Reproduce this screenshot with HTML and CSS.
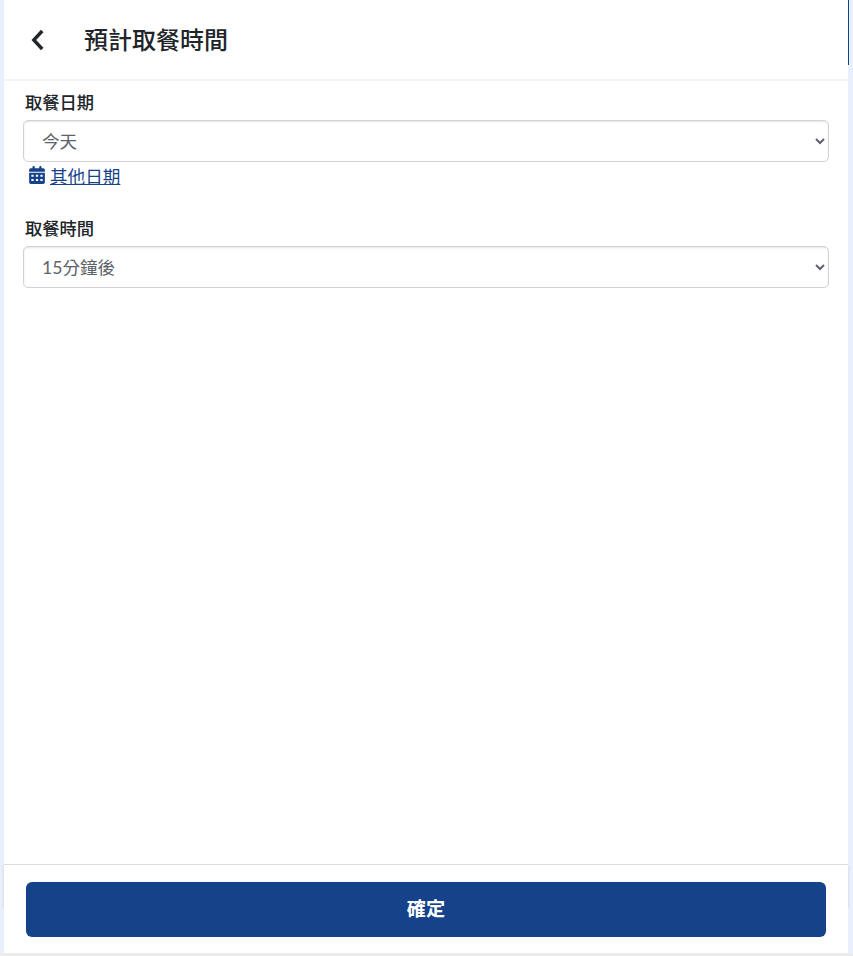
FILE: index.html
```html
<!DOCTYPE html>
<html lang="zh-Hant">
<head>
<meta charset="utf-8">
<title>預計取餐時間</title>
<link rel="stylesheet" href="styles.css">
</head>
<body>
<div class="panel">
  <header class="top">
    <a class="back" href="#" aria-label="返回">
      <svg width="14" height="22" viewBox="0 0 14 22"><path d="M11.200 2 2.800 11l8.400 9" fill="none" stroke="#212529" stroke-width="3.400"/></svg>
    </a>
    <h1 class="title">預計取餐時間</h1>
  </header>
  <main class="content">
    <section class="field">
      <label class="label" for="d">取餐日期</label>
      <select class="select" id="d"><option>今天</option></select>
      <a class="other" href="#">
        <svg class="cal" width="16" height="18" viewBox="0 0 448 512"><path fill="#164289" d="M96 32v32H48C21.500 64 0 85.500 0 112v48h448v-48c0-26.500-21.500-48-48-48h-48V32c0-17.700-14.300-32-32-32s-32 14.300-32 32v32H160V32c0-17.700-14.300-32-32-32S96 14.300 96 32zM448 192H0v272c0 26.500 21.500 48 48 48h352c26.500 0 48-21.500 48-48V192zM64 248h64v56H64v-56zm128 0h64v56h-64v-56zm128 0h64v56h-64v-56zM64 368h64v56H64v-56zm128 0h64v56h-64v-56zm128 0h64v56h-64v-56z" fill-rule="evenodd"/></svg>
        <span class="other-text">其他日期</span>
      </a>
    </section>
    <section class="field field-time">
      <label class="label" for="t">取餐時間</label>
      <select class="select" id="t"><option>15分鐘後</option></select>
    </section>
  </main>
  <footer class="bottom">
    <button class="confirm" type="button"><span class="confirm-text">確定</span></button>
  </footer>
</div>
</body>
</html>
```
FILE: styles.css
```css
* { box-sizing: border-box; }
html, body { height: 100%; }
body {
  margin: 0;
  background: #e8effd;
  font-family: Lato, "Noto Sans CJK TC", sans-serif;
  color: #212529;
  overflow: hidden;
}
body::after {
  content: "";
  position: absolute;
  left: 0;
  right: 0;
  top: 953px;
  height: 3px;
  background: #ececec;
}
.panel {
  width: 844px;
  height: 953px;
  margin-left: 4px;
  background: #fff;
  display: flex;
  flex-direction: column;
  position: relative;
}
.panel::after {
  content: "";
  position: absolute;
  top: 0;
  right: -1px;
  width: 1px;
  height: 65px;
  background: #164289;
}
.top {
  height: 81px;
  flex: none;
  display: flex;
  align-items: center;
  border-bottom: 2px solid #f3f3f4;
  padding-left: 24px;
}
.back { display: flex; width: 56px; padding-left: 3px; }
.title {
  margin: 0;
  font-size: 24px;
  font-weight: 500;
  line-height: 30px;
  color: #212529;
}
.content { flex: 1; padding: 10px 19px 0 19px; }
.field { display: flex; flex-direction: column; align-items: stretch; }
.field-time { margin-top: 30px; }
.label {
  font-size: 17.300px;
  font-weight: 500;
  line-height: 24px;
  margin: 0 0 5px 2px;
  color: #212529;
  height: 24px;
}
.select {
  height: 42px;
  width: 100%;
  padding: 0 14px;
  font-family: Lato, "Noto Sans CJK TC", sans-serif;
  font-size: 17.600px;
  color: #5c636a;
  background: #fff;
  border: 1px solid #d0d3d6;
  border-radius: 5px;
  box-shadow: inset 0 1px 2px rgba(0, 0, 0, .1);
}
.other {
  display: flex;
  align-items: center;
  gap: 5px;
  margin: 1px 0 0 6px;
  height: 24px;
  font-size: 17.600px;
  color: #164289;
  text-decoration: none;
}
.other-text { text-decoration: underline; }
.bottom {
  flex: none;
  height: 89px;
  border-top: 1px solid #dcdcdc;
  padding: 17px 22px 0;
  position: relative;
}
.bottom::before {
  content: "";
  position: absolute;
  top: 0;
  left: 0;
  right: 0;
  height: 44px;
  box-shadow: 0 0 3px rgba(0, 0, 0, .14);
  clip-path: inset(0 -6px);
  pointer-events: none;
}
.confirm {
  display: block;
  width: 100%;
  height: 55px;
  padding: 0 0 3px;
  border: 0;
  border-radius: 6px;
  background: #164289;
  color: #fff;
  font-family: Lato, "Noto Sans CJK TC", sans-serif;
  font-size: 19.200px;
  font-weight: 700;
}
```
